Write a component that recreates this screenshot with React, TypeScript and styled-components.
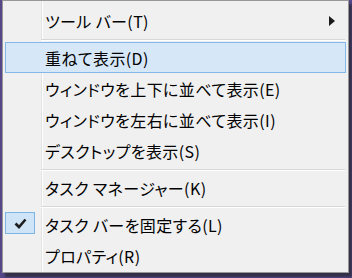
import React from "react";
import styled, { createGlobalStyle } from "styled-components";

const Global = createGlobalStyle`
  html, body { margin: 0; padding: 0; }
  body {
    width: 352px;
    height: 278px;
    overflow: hidden;
    background: #55478a;
    font-family: "Noto Sans CJK JP", "Noto Sans", sans-serif;
  }
`;

const Menu = styled.div`
  box-sizing: border-box;
  margin-left: 2px;
  width: 347px;
  height: 273px;
  border: 1px solid #979797;
  background-color: #f0f0f0;
  background-image: linear-gradient(
    to right,
    transparent 38px,
    #e2e3e3 38px,
    #e2e3e3 39px,
    #ffffff 39px,
    #ffffff 40px,
    transparent 40px
  );
  box-shadow: 3px 4px 2px rgba(40, 40, 50, 0.75);
  padding: 4px 2px 1px 2px;
  display: flex;
  flex-direction: column;
`;

const Item = styled.div<{ $hot?: boolean }>`
  box-sizing: border-box;
  position: relative;
  height: 31px;
  display: flex;
  align-items: center;
  padding-left: 39px;
  font-size: 16px;
  letter-spacing: 0.4px;
  color: #000;
  font-feature-settings: "palt";
  border: 1px solid ${(p) => (p.$hot ? "#84b8e9" : "transparent")};
  background: ${(p) => (p.$hot ? "#d6e7f7" : "transparent")};
`;

const Label = styled.span`
  flex: 1;
  line-height: 1;
  padding-top: 1px;
  white-space: nowrap;
`;

const Arrow = styled.svg`
  width: 6px;
  height: 10px;
  margin-right: 10px;
`;

const CheckBox = styled.span`
  position: absolute;
  left: -1px;
  top: 2px;
  width: 30px;
  height: 22px;
  box-sizing: border-box;
  border: 1px solid #7db5e6;
  background: #cfe5f7;
  display: flex;
  align-items: center;
  justify-content: center;
`;

const Sep = styled.div`
  height: 6px;
  display: flex;
  align-items: center;
  padding-left: 36px;
  padding-right: 1px;
  &::after {
    content: "";
    flex: 1;
    height: 1px;
    background: #d7d7d7;
    box-shadow: 0 1px 0 #ffffff;
  }
`;

export default function App() {
  return (
    <>
      <Global />
      <Menu>
        <Item>
          <Label>ツール バー(T)</Label>
          <Arrow viewBox="0 0 6 10">
            <path d="M0 0 L6 5 L0 10 Z" fill="#1a1a1a" />
          </Arrow>
        </Item>
        <Sep />
        <Item $hot>
          <Label>重ねて表示(D)</Label>
        </Item>
        <Item>
          <Label>ウィンドウを上下に並べて表示(E)</Label>
        </Item>
        <Item>
          <Label>ウィンドウを左右に並べて表示(I)</Label>
        </Item>
        <Item>
          <Label>デスクトップを表示(S)</Label>
        </Item>
        <Sep />
        <Item>
          <Label>タスク マネージャー(K)</Label>
        </Item>
        <Sep />
        <Item>
          <CheckBox>
            <svg width="13" height="11" viewBox="0 0 13 11">
              <path d="M1.5 5.5 L5 9 L11.5 1.5" fill="none" stroke="#1e1e1e" strokeWidth="2.6" />
            </svg>
          </CheckBox>
          <Label>タスク バーを固定する(L)</Label>
        </Item>
        <Item>
          <Label>プロパティ(R)</Label>
        </Item>
      </Menu>
    </>
  );
}
